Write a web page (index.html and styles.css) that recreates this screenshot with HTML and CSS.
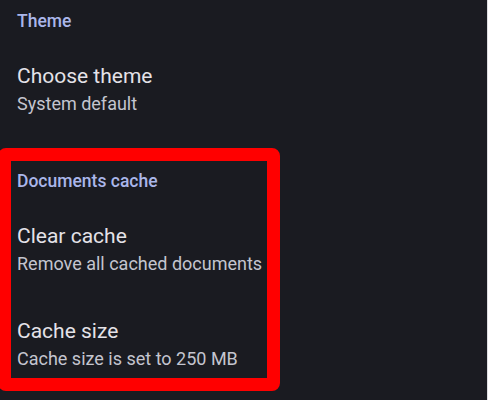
FILE: index.html
```html
<!DOCTYPE html>
<html>
<head>
<meta charset="utf-8">
<link rel="stylesheet" href="styles.css">
</head>
<body>
<div class="app">
  <section class="section first">
    <h2 class="section-header">Theme</h2>
    <div class="item">
      <div class="item-title">Choose theme</div>
      <div class="item-sub">System default</div>
    </div>
  </section>
  <section class="section">
    <h2 class="section-header">Documents cache</h2>
    <div class="item">
      <div class="item-title">Clear cache</div>
      <div class="item-sub">Remove all cached documents</div>
    </div>
    <div class="item">
      <div class="item-title">Cache size</div>
      <div class="item-sub">Cache size is set to 250 MB</div>
    </div>
  </section>
  <div class="highlight"></div>
</div>
</body>
</html>
```

FILE: styles.css
```css
html, body {
  margin: 0;
  padding: 0;
  height: 100%;
  background: #dedee2;
  overflow: hidden;
}
.app {
  position: relative;
  width: calc(100% - 1px);
  height: 100%;
  background: #1a1b21;
  font-family: Roboto, "Noto Sans", sans-serif;
  overflow: hidden;
}
.section-header {
  margin: 0;
  padding: 41px 17px 0;
  font-size: 17.5px;
  line-height: 24px;
  font-weight: 500;
  color: #aab6ea;
}
.section.first .section-header {
  padding-top: 9px;
}
.item {
  padding: 29px 17px 10px;
}
.item-title {
  font-size: 21px;
  line-height: 28px;
  color: #e4e2e8;
}
.item-sub {
  font-size: 18px;
  line-height: 28px;
  color: #c4c5cf;
}
.highlight {
  position: absolute;
  left: -2px;
  top: 148px;
  width: 256px;
  height: 217px;
  border: 13px solid #ff0000;
  border-radius: 8px;
  pointer-events: none;
}
```
